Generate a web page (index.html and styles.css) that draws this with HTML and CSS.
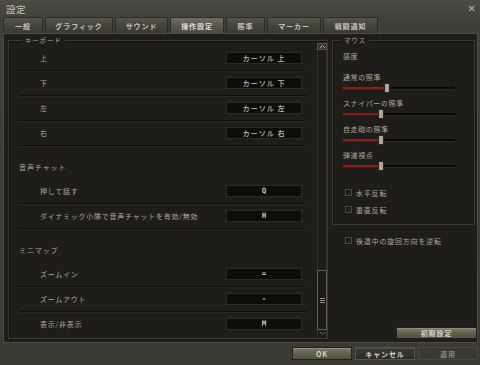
FILE: index.html
```html
<!DOCTYPE html>
<html lang="ja">
<head>
<meta charset="utf-8">
<title>設定</title>
<link rel="stylesheet" href="styles.css">
</head>
<body>
<div class="window">
  <div class="titlebar">
    <span class="title">設定</span>
    <span class="close">✕</span>
  </div>
  <div class="tabs">
    <div class="tab w40">一般</div>
    <div class="tab w68">グラフィック</div>
    <div class="tab w53">サウンド</div>
    <div class="tab w54 active">操作設定</div>
    <div class="tab w39">照準</div>
    <div class="tab w54">マーカー</div>
    <div class="tab w55">戦闘通知</div>
  </div>
  <div class="panel">
    <div class="fieldset keys">
      <span class="legend">キーボード</span>
      <div class="list">
        <div class="row"><span class="label">上</span><span class="key">カーソル 上</span></div>
        <div class="row"><span class="label">下</span><span class="key">カーソル 下</span></div>
        <div class="row"><span class="label">左</span><span class="key">カーソル 左</span></div>
        <div class="row"><span class="label">右</span><span class="key">カーソル 右</span></div>
        <div class="section">音声チャット</div>
        <div class="row"><span class="label">押して話す</span><span class="key mono">Q</span></div>
        <div class="row"><span class="label">ダイナミック小隊で音声チャットを有効/無効</span><span class="key mono">H</span></div>
        <div class="section">ミニマップ</div>
        <div class="row"><span class="label">ズームイン</span><span class="key mono">=</span></div>
        <div class="row"><span class="label">ズームアウト</span><span class="key mono">-</span></div>
        <div class="row last"><span class="label">表示/非表示</span><span class="key mono">M</span></div>
      </div>
      <div class="scrollbar">
        <div class="sb-btn up"><svg width="7" height="5" viewBox="0 0 7 5"><path d="M1 4 L3.5 1.5 L6 4" fill="none" stroke="#b8b4a8" stroke-width="1"/></svg></div>
        <div class="sb-track">
          <div class="sb-thumb"><span class="grip"></span></div>
          <div class="sb-down"><svg width="7" height="5" viewBox="0 0 7 5"><path d="M1 1 L3.5 3.5 L6 1" fill="none" stroke="#6a675e" stroke-width="1"/></svg></div>
        </div>
      </div>
    </div>
    <div class="side">
      <div class="fieldset mouse">
        <span class="legend">マウス</span>
        <div class="heading">感度</div>
        <div class="slider-group">
          <div class="slabel">通常の照準</div>
          <div class="slider"><div class="fill" style="width:37%"></div><div class="thumb" style="left:37%"></div></div>
        </div>
        <div class="slider-group">
          <div class="slabel">スナイパーの照準</div>
          <div class="slider"><div class="fill" style="width:31%"></div><div class="thumb" style="left:31%"></div></div>
        </div>
        <div class="slider-group">
          <div class="slabel">自走砲の照準</div>
          <div class="slider"><div class="fill" style="width:31%"></div><div class="thumb" style="left:31%"></div></div>
        </div>
        <div class="slider-group">
          <div class="slabel">弾道視点</div>
          <div class="slider"><div class="fill" style="width:31%"></div><div class="thumb" style="left:31%"></div></div>
        </div>
        <div class="checks">
          <label class="check"><span class="box"></span>水平反転</label>
          <label class="check"><span class="box"></span>垂直反転</label>
        </div>
      </div>
      <label class="check outer"><span class="box"></span>後退中の旋回方向を逆転</label>
      <div class="reset-wrap"><button class="btn reset">初期設定</button></div>
    </div>
  </div>
  <div class="footer">
    <button class="btn ok">OK</button>
    <button class="btn cancel">キャンセル</button>
    <button class="btn apply">適用</button>
  </div>
</div>
</body>
</html>
```

FILE: styles.css
```css
* { box-sizing: border-box; }
html, body { margin: 0; padding: 0; }
body {
  width: 480px;
  height: 365px;
  overflow: hidden;
  background: #3c3b33;
  font-family: "Noto Sans CJK JP", "Noto Sans", sans-serif;
  color: #aaa69a;
}
.window {
  width: 480px;
  height: 365px;
  display: flex;
  flex-direction: column;
  background: linear-gradient(180deg, #4d4c42 0%, #404037 6%, #3a3a32 100%);
}
.titlebar {
  height: 17px;
  display: flex;
  align-items: center;
  justify-content: space-between;
  padding: 0 4px 0 6px;
}
.title {
  font-size: 9.5px;
  line-height: 12px;
  color: #c8c6bc;
  letter-spacing: 0.5px;
}
.close {
  font-size: 10px;
  line-height: 10px;
  color: #b8b6ac;
  font-family: "DejaVu Sans", sans-serif;
  font-weight: bold;
  margin-top: 1px;
}
.tabs {
  height: 16px;
  display: flex;
  gap: 2px;
  padding-left: 3px;
  align-items: flex-end;
}
.tab {
  height: 16px;
  display: flex;
  align-items: center;
  justify-content: center;
  font-size: 7px;
  letter-spacing: 0.9px;
  font-weight: 700;
  color: #c4c2b8;
  background: linear-gradient(180deg, #56554a 0%, #46453c 50%, #3a3a32 100%);
  border: 1px solid #2c2b25;
  border-bottom: none;
  border-radius: 2px 2px 0 0;
}
.tab.active {
  background: linear-gradient(180deg, #6e6d60 0%, #5a594e 50%, #4a4a40 100%);
  color: #e0ded4;
}
.w40 { width: 40px; }
.w68 { width: 68px; }
.w53 { width: 53px; }
.w54 { width: 54px; }
.w39 { width: 39px; }
.w55 { width: 55px; }

.panel {
  height: 310px;
  margin: 0 2px 0 3px;
  border: 1px solid #4e4c43;
  background: #1f1d19;
  padding: 6px 0 3px 4px;
  display: flex;
  gap: 4px;
}
.fieldset {
  position: relative;
  border: 1px solid #3b3932;
  box-shadow: inset 1px 1px 0 #141310;
}
.legend {
  position: absolute;
  top: -5px;
  padding: 0 3px;
  background: #1f1d19;
  font-size: 6.5px;
  line-height: 9px;
  letter-spacing: 0.8px;
  color: #a7a397;
}
.keys {
  width: 320px;
  height: 299px;
  display: flex;
  padding: 1px 0 0 10px;
}
.keys .legend { left: 13px; }
.list {
  width: 288px;
  padding-top: 4px;
  display: flex;
  flex-direction: column;
}
.row {
  height: 25px;
  flex: none;
  display: flex;
  align-items: center;
  justify-content: space-between;
  padding: 0 5px 1px 21px;
  border-bottom: 1px solid #0e0d0b;
  box-shadow: 0 1px 0 #2a2823;
}
.row.last { border-bottom: none; box-shadow: none; }
.label {
  font-size: 7px;
  letter-spacing: 0.75px;
  color: #aca89c;
}
.key {
  width: 76px;
  height: 12px;
  background: #0c0c0a;
  border: 1px solid #2c2a25;
  font-size: 7.2px;
  line-height: 10px;
  text-align: center;
  letter-spacing: 0.9px;
  color: #c2beb2;
  font-weight: 500;
}
.key.mono {
  font-family: "DejaVu Sans Mono", monospace;
  font-size: 7.5px;
  letter-spacing: 0;
  font-weight: 700;
  color: #c8c4b8;
}
.section {
  height: 33px;
  flex: none;
  padding-top: 15px;
  font-size: 7px;
  line-height: 12px;
  letter-spacing: 0.9px;
  color: #a8a498;
}
.scrollbar {
  width: 10px;
  margin-left: 10px;
  display: flex;
  flex-direction: column;
}
.sb-btn {
  height: 7px;
  margin-top: 1px;
  background: #35342c;
  border: 1px solid #5a584e;
  display: flex;
  align-items: center;
  justify-content: center;
}
.sb-track {
  flex: 1;
  border-left: 1px solid #35332d;
  border-right: 1px solid #35332d;
  display: flex;
  flex-direction: column;
  justify-content: flex-end;
  padding-bottom: 1px;
}
.sb-thumb {
  height: 60px;
  margin: 0 -1px;
  border: 1px solid #5f5c52;
  background: #1b1a16;
  display: flex;
  align-items: center;
  justify-content: center;
}
.grip {
  width: 5px;
  height: 5px;
  border-top: 1px solid #8f8b80;
  border-bottom: 1px solid #8f8b80;
  position: relative;
}
.grip::after {
  content: "";
  position: absolute;
  left: 0;
  right: 0;
  top: 1px;
  border-top: 1px solid #8f8b80;
}
.sb-down {
  height: 7px;
  display: flex;
  align-items: center;
  justify-content: center;
}

.side {
  width: 145px;
  display: flex;
  flex-direction: column;
}
.mouse {
  width: 143px;
  height: 185px;
  padding: 9px 0 0 10px;
}
.mouse .legend { left: 8px; }
.heading {
  font-size: 7px;
  line-height: 12px;
  letter-spacing: 0.6px;
  color: #aca89c;
  margin-bottom: 10px;
}
.slider-group {
  height: 26px;
}
.slabel {
  font-size: 7px;
  line-height: 11px;
  letter-spacing: 0.6px;
  color: #aca89c;
}
.slider {
  position: relative;
  width: 112px;
  height: 10px;
  display: flex;
  align-items: center;
}
.slider::before {
  content: "";
  position: absolute;
  left: 0;
  right: 0;
  top: 4px;
  height: 2px;
  background: #0a0908;
  box-shadow: 0 1px 0 #2a2823;
}
.fill {
  position: absolute;
  left: 0;
  top: 4px;
  height: 2px;
  background: #8c1c14;
}
.thumb {
  position: absolute;
  top: 0;
  width: 6px;
  height: 10px;
  background: linear-gradient(90deg, #8a867a 0%, #c4c0b4 35%, #5c594f 50%, #c4c0b4 65%, #8a867a 100%);
  border: 1px solid #2a2823;
}
.checks {
  margin-top: 8px;
  padding-left: 2px;
}
.check {
  display: flex;
  align-items: center;
  height: 17px;
  gap: 4px;
  font-size: 7px;
  letter-spacing: 0.8px;
  color: #aca89c;
}
.box {
  width: 7px;
  height: 7px;
  border: 1px solid #4a4840;
  background: #22201b;
  box-shadow: inset 1px 1px 0 #121110;
}
.check.outer {
  margin: 7px 0 0 13px;
}
.reset-wrap {
  margin-top: auto;
  display: flex;
  justify-content: flex-end;
}
.btn {
  font-family: "Noto Sans CJK JP", sans-serif;
  font-size: 7px;
  letter-spacing: 0.9px;
  font-weight: 700;
  color: #d6d4ca;
  height: 12px;
  padding: 0;
  line-height: 10px;
  border: 1px solid #22211c;
  background: linear-gradient(180deg, #7e7d6e 0%, #64634f 45%, #52513f 100%);
  box-shadow: inset 0 1px 0 #8e8d80;
}
.reset { width: 81px; }
.footer {
  flex: 1;
  display: flex;
  justify-content: flex-end;
  gap: 3px;
  padding: 4px 2px 0 0;
}
.footer .btn { width: 60px; height: 13px; }
.cancel {
  background: linear-gradient(180deg, #3a3a32 0%, #2c2c26 100%);
  box-shadow: inset 0 1px 0 #4a4a40;
  border-color: #55544a;
}
.apply {
  background: repeating-linear-gradient(45deg, #3e3d35 0 1px, #35342d 1px 2px);
  box-shadow: none;
  border-color: #4a4940;
  color: #8c897f;
}
```
